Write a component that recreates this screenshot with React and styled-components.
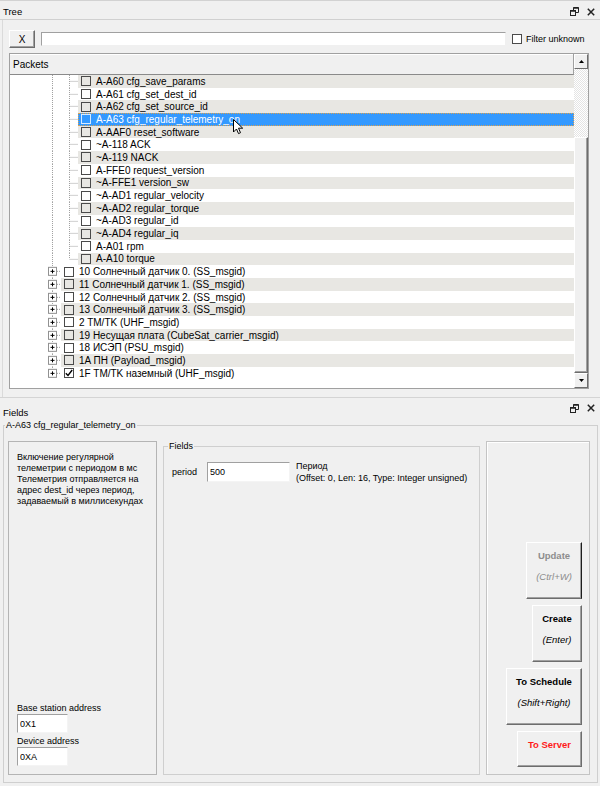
import React from "react";
import styled, { createGlobalStyle } from "styled-components";

const ROW_H = 12.7;

const GlobalStyle = createGlobalStyle`
  html, body {
    margin: 0;
    padding: 0;
    background: #f0f0f0;
  }
  body {
    font-family: "Liberation Sans", Arial, sans-serif;
    color: #000;
  }
  * {
    box-sizing: border-box;
  }
`;

const Page = styled.div`
  width: 600px;
  height: 786px;
  overflow: hidden;
  display: flex;
  flex-direction: column;
  background: #f0f0f0;
`;

/* ---------- dock panels ---------- */

const TreePanel = styled.section`
  height: 398px;
  flex: none;
  display: flex;
  flex-direction: column;
  border-top: 1px solid #d2d2d2;
  border-bottom: 1px solid #d4d4d4;
`;

const TitleBar = styled.div`
  height: ${({ $h }) => $h}px;
  flex: none;
  display: flex;
  align-items: ${({ $bottom }) => ($bottom ? "flex-end" : "center")};
  justify-content: space-between;
  padding: ${({ $pad }) => $pad};
  font-size: 9.5px;
  line-height: 11px;
  border-bottom: ${({ $line }) => ($line ? "1px solid #d0d0d0" : "none")};
`;

const WinIcons = styled.div`
  display: flex;
  align-items: center;
  gap: 8px;
  align-self: center;
`;

const TreeBody = styled.div`
  flex: 1;
  margin-left: 2px;
  border-left: 1px solid #dadada;
  padding: 10px 11px 0 6px;
  display: flex;
  flex-direction: column;
`;

const Toolbar = styled.div`
  display: flex;
  align-items: center;
  height: 18px;
  gap: 6px;
`;

const RaisedButton = styled.button`
  width: 26px;
  height: 18px;
  padding: 0;
  font: inherit;
  font-size: 10px;
  background: #f0f0f0;
  border: 1px solid;
  border-color: #fff #6d6d6d #6d6d6d #fff;
  box-shadow: inset -1px -1px 0 #a0a0a0;
  color: #000;
`;

const SearchInput = styled.div`
  width: 465px;
  height: 14px;
  background: #fff;
  border: 1px solid;
  border-color: #a0a0a0 #f0f0f0 #f0f0f0 #a0a0a0;
`;

const FilterLabel = styled.label`
  display: flex;
  align-items: center;
  gap: 4px;
  font-size: 9px;
`;

const Box = styled.span`
  width: 10px;
  height: 10px;
  flex: none;
  border: 1px solid ${({ $light }) => ($light ? "#d6eaff" : "#4a4a4a")};
  background: ${({ $fill }) => $fill || "transparent"};
  display: flex;
  align-items: center;
  justify-content: center;
`;

/* ---------- packets tree ---------- */

const PacketsBox = styled.div`
  position: relative;
  margin-top: 5px;
  height: 336px;
  border: 1px solid #a0a0a0;
  display: grid;
  grid-template-columns: 1fr 14px;
  grid-template-rows: 21px 1fr;
  overflow: hidden;
`;

const Header = styled.div`
  grid-column: 1;
  grid-row: 1;
  display: flex;
  align-items: center;
  padding-left: 3px;
  font-size: 10px;
  background: #f0f0f0;
  border-bottom: 1px solid #8a8a8a;
  border-right: 1px solid #a0a0a0;
  box-shadow: inset 0 1px 0 #fff;
`;

const List = styled.div`
  grid-column: 1;
  grid-row: 2;
  background: #fff;
  padding-left: 34px;
  overflow: hidden;
`;

const Row = styled.div`
  height: ${ROW_H}px;
  display: flex;
`;

const GuideSvg = styled.svg`
  width: 17px;
  height: 100%;
  flex: none;
  display: block;
`;

const tones = {
  white: "#fff",
  grey: "#e8e7e3",
  sel: "#3399ff",
};

const Item = styled.div`
  flex: 1;
  display: flex;
  align-items: center;
  gap: 5px;
  padding-left: 3px;
  font-size: 10px;
  white-space: nowrap;
  background: ${({ $tone }) => tones[$tone]};
  color: ${({ $tone }) => ($tone === "sel" ? "#fff" : "#000")};
  outline: ${({ $tone }) => ($tone === "sel" ? "1px dotted #d8a050" : "none")};
  outline-offset: -1px;
`;

const Scrollbar = styled.div`
  grid-column: 2;
  grid-row: 1 / span 2;
  display: flex;
  flex-direction: column;
`;

const ArrowBtn = styled.div`
  height: 15px;
  flex: none;
  display: flex;
  align-items: center;
  justify-content: center;
  background: #f0f0f0;
  border: 1px solid;
  border-color: #fff #6d6d6d #6d6d6d #fff;
`;

const Track = styled.div`
  flex: 1;
  display: flex;
  flex-direction: column;
  justify-content: flex-end;
  background-color: #fff;
  background-image: conic-gradient(#e4e4e4 25%, #fff 0 50%, #e4e4e4 0 75%, #fff 0);
  background-size: 2px 2px;
`;

const Thumb = styled.div`
  height: ${({ $h }) => $h}px;
  background: #f0f0f0;
  border: 1px solid;
  border-color: #fff #6d6d6d #6d6d6d #fff;
  box-shadow: inset -1px -1px 0 #a0a0a0;
`;

const Cursor = styled.svg`
  position: absolute;
  left: 223px;
  top: 65px;
  width: 11px;
  height: 16px;
`;

/* ---------- fields panel ---------- */

const FieldsPanel = styled.section`
  flex: 1;
  display: flex;
  flex-direction: column;
`;

const GroupBox = styled.fieldset`
  margin: 0 2px 0 3px;
  padding: 10px 7px 7px 4px;
  border: 1px solid #cfcfcf;
  min-width: 0;
  display: grid;
  grid-template-columns: 149px 317px 1fr;
  grid-template-rows: 334px;
  gap: 6px;
`;

const Legend = styled.legend`
  font-size: 9px;
  line-height: 11px;
  padding: 0 1px;
  margin-left: ${({ $shift }) => $shift}px;
`;

const DescBox = styled.div`
  border: 1px solid #b4b4b4;
  padding: 10px 8px 8px 8px;
  display: flex;
  flex-direction: column;
  justify-content: space-between;
  font-size: 9px;
  line-height: 11px;
`;

const DescText = styled.div`
  white-space: pre;
`;

const AddrBlock = styled.div`
  display: flex;
  flex-direction: column;
`;

const AddrLabel = styled.div`
  margin-top: ${({ $top }) => $top}px;
`;

const TextField = styled.input`
  width: ${({ $w }) => $w}px;
  height: ${({ $h }) => $h}px;
  margin: 0;
  padding: 0 0 0 2px;
  font: inherit;
  font-size: 9px;
  color: #000;
  background: #fff;
  border: 1px solid;
  border-color: #a0a0a0 #f4f4f4 #f4f4f4 #a0a0a0;
  outline: none;
`;

const FieldsGroup = styled.fieldset`
  margin: 0;
  padding: 10px 8px 0 8px;
  border: 1px solid #cfcfcf;
  min-width: 0;
  font-size: 9px;
`;

const FieldRow = styled.div`
  display: flex;
  align-items: flex-start;
`;

const FieldName = styled.div`
  line-height: 20px;
  margin-right: 10px;
`;

const FieldInfo = styled.div`
  margin: -2px 0 0 6px;
  line-height: 12px;
  white-space: nowrap;
`;

const ActionBox = styled.div`
  border: 1px solid #c4c4c4;
  box-shadow: inset 1px 1px 0 #fff;
  display: flex;
  flex-direction: column;
  align-items: flex-end;
  justify-content: flex-end;
  gap: 6px;
  padding: 0 7px 7px 0;
`;

const ActionButton = styled.button`
  width: ${({ $w }) => $w}px;
  margin: 0;
  padding: 7px 0 15px;
  font: inherit;
  background: #f0f0f0;
  border: 1px solid;
  border-color: #fff ${({ $disabled }) => ($disabled ? "#1e1e1e" : "#6d6d6d")}
    #6d6d6d #fff;
  box-shadow: inset -1px -1px 0 #a0a0a0;
  display: flex;
  flex-direction: column;
  align-items: center;
  color: ${({ $color }) => $color};
`;

const ActionTitle = styled.span`
  font-size: 9.5px;
  font-weight: bold;
  line-height: 12px;
`;

const ActionKey = styled.span`
  margin-top: 9px;
  font-size: 9.5px;
  font-style: italic;
  line-height: 12px;
`;

/* ---------- drawings ---------- */

const RestoreIcon = () => (
  <svg width="9" height="9" viewBox="0 0 9 9">
    <path d="M3.5 3V0.5h5v5H6" fill="none" stroke="#222" />
    <path d="M3.5 1h5" stroke="#222" strokeWidth="1.5" />
    <rect x="0.5" y="3.5" width="5" height="5" fill="none" stroke="#222" />
    <path d="M0.5 4h5" stroke="#222" strokeWidth="1.5" />
  </svg>
);

const CloseIcon = () => (
  <svg width="8" height="8" viewBox="0 0 8 8">
    <path d="M0.8 0.8l6.4 6.4M7.2 0.8L0.8 7.2" stroke="#222" strokeWidth="1.5" />
  </svg>
);

const Check = () => (
  <svg width="8" height="8" viewBox="0 0 8 8">
    <path d="M0.8 4.2l2.2 2.2L7.2 1" fill="none" stroke="#000" strokeWidth="1.4" />
  </svg>
);

const Triangle = ({ down }) => (
  <svg width="5" height="3" viewBox="0 0 5 3">
    <path d={down ? "M0 0h5L2.5 3z" : "M0 3h5L2.5 0z"} fill="#000" />
  </svg>
);

const Guide = ({ v, h, expander }) => {
  const mid = ROW_H / 2;
  return (
    <GuideSvg viewBox={`0 0 17 ${ROW_H}`} preserveAspectRatio="none">
      {v && (
        <line
          x1="8.5"
          x2="8.5"
          y1="0"
          y2={v === "top" ? mid : ROW_H}
          stroke="#a0a0a0"
          strokeDasharray="1 1"
        />
      )}
      {h && (
        <line
          x1={expander ? 13 : 9.5}
          x2="17"
          y1={mid}
          y2={mid}
          stroke="#a0a0a0"
          strokeDasharray="1 1"
        />
      )}
      {expander && (
        <g>
          <rect x="4.5" y={mid - 4} width="8" height="8" fill="#fff" stroke="#919191" />
          <path
            d={`M6.5 ${mid}h4M8.5 ${mid - 2}v4`}
            stroke="#000"
            strokeWidth="1"
          />
        </g>
      )}
    </GuideSvg>
  );
};

/* ---------- data ---------- */

const packets = [
  "A-A60 cfg_save_params",
  "A-A61 cfg_set_dest_id",
  "A-A62 cfg_set_source_id",
  "A-A63 cfg_regular_telemetry_on",
  "A-AAF0 reset_software",
  "~A-118 ACK",
  "~A-119 NACK",
  "A-FFE0 request_version",
  "~A-FFE1 version_sw",
  "~A-AD1 regular_velocity",
  "~A-AD2 regular_torque",
  "~A-AD3 regular_id",
  "~A-AD4 regular_iq",
  "A-A01 rpm",
  "A-A10 torque",
];

const groups = [
  "10 Солнечный датчик 0. (SS_msgid)",
  "11 Солнечный датчик 1. (SS_msgid)",
  "12 Солнечный датчик 2. (SS_msgid)",
  "13 Солнечный датчик 3. (SS_msgid)",
  "2 TM/TK (UHF_msgid)",
  "19 Несущая плата (CubeSat_carrier_msgid)",
  "18 ИСЭП (PSU_msgid)",
  "1A ПН (Payload_msgid)",
  "1F TM/TK наземный (UHF_msgid)",
];

const rows = [
  ...packets.map((text, i) => ({
    text,
    deep: true,
    last: i === packets.length - 1,
    selected: i === 3,
  })),
  ...groups.map((text, i) => ({
    text,
    deep: false,
    last: i === groups.length - 1,
    checked: i === groups.length - 1,
  })),
];

const description = `Включение регулярной
телеметрии с периодом в мс
Телеметрия отправляется на
адрес dest_id через период,
задаваемый в миллисекундах`;

const actions = [
  { title: "Update", key: "(Ctrl+W)", w: 56, color: "#8d8d8d", disabled: true },
  { title: "Create", key: "(Enter)", w: 50, color: "#000" },
  { title: "To Schedule", key: "(Shift+Right)", w: 76, color: "#000" },
  { title: "To Server", w: 65, color: "#ff1a1a" },
];

const TreeRow = ({ row, index }) => {
  const tone = row.selected ? "sel" : index % 2 === 0 ? "grey" : "white";
  return (
    <Row>
      {row.deep ? (
        <>
          <Guide v="through" />
          <Guide v={row.last ? "top" : "through"} h />
        </>
      ) : (
        <Guide v={row.last ? "top" : "through"} h expander />
      )}
      <Item $tone={tone}>
        <Box $light={row.selected}>{row.checked && <Check />}</Box>
        {row.text}
      </Item>
    </Row>
  );
};

export default function App() {
  return (
    <Page>
      <GlobalStyle />
      <TreePanel>
        <TitleBar $h={19} $pad="3px 5px 0 3px" $line>
          <span>Tree</span>
          <WinIcons>
            <RestoreIcon />
            <CloseIcon />
          </WinIcons>
        </TitleBar>
        <TreeBody>
          <Toolbar>
            <RaisedButton>X</RaisedButton>
            <SearchInput />
            <FilterLabel>
              <Box $fill="#fff" />
              Filter unknown
            </FilterLabel>
          </Toolbar>
          <PacketsBox>
            <Header>Packets</Header>
            <List>
              {rows.map((row, i) => (
                <TreeRow key={row.text} row={row} index={i} />
              ))}
            </List>
            <Scrollbar>
              <ArrowBtn>
                <Triangle />
              </ArrowBtn>
              <Track>
                <Thumb $h={236} />
              </Track>
              <ArrowBtn>
                <Triangle down />
              </ArrowBtn>
            </Scrollbar>
            <Cursor viewBox="0 0 11 16">
              <path
                d="M0.5 0.5v12.5l3-3 2 4.6 2-0.9-2-4.5h4.2z"
                fill="#fff"
                stroke="#000"
                strokeLinejoin="round"
              />
            </Cursor>
          </PacketsBox>
        </TreeBody>
      </TreePanel>

      <FieldsPanel>
        <TitleBar $h={22} $pad="0 5px 2px 3px" $bottom>
          <span>Fields</span>
          <WinIcons>
            <RestoreIcon />
            <CloseIcon />
          </WinIcons>
        </TitleBar>
        <GroupBox>
          <Legend $shift={-3}>A-A63 cfg_regular_telemetry_on</Legend>
          <DescBox>
            <DescText>{description}</DescText>
            <AddrBlock>
              <AddrLabel $top={0}>Base station address</AddrLabel>
              <TextField $w={51} $h={19} defaultValue="0X1" readOnly />
              <AddrLabel $top={3}>Device address</AddrLabel>
              <TextField $w={51} $h={19} defaultValue="0XA" readOnly />
            </AddrBlock>
          </DescBox>
          <FieldsGroup>
            <Legend $shift={-4}>Fields</Legend>
            <FieldRow>
              <FieldName>period</FieldName>
              <TextField $w={83} $h={20} defaultValue="500" readOnly />
              <FieldInfo>
                Период
                <br />
                (Offset: 0, Len: 16, Type: Integer unsigned)
              </FieldInfo>
            </FieldRow>
          </FieldsGroup>
          <ActionBox>
            {actions.map((a) => (
              <ActionButton
                key={a.title}
                $w={a.w}
                $color={a.color}
                $disabled={a.disabled}
              >
                <ActionTitle>{a.title}</ActionTitle>
                {a.key && <ActionKey>{a.key}</ActionKey>}
              </ActionButton>
            ))}
          </ActionBox>
        </GroupBox>
      </FieldsPanel>
    </Page>
  );
}
